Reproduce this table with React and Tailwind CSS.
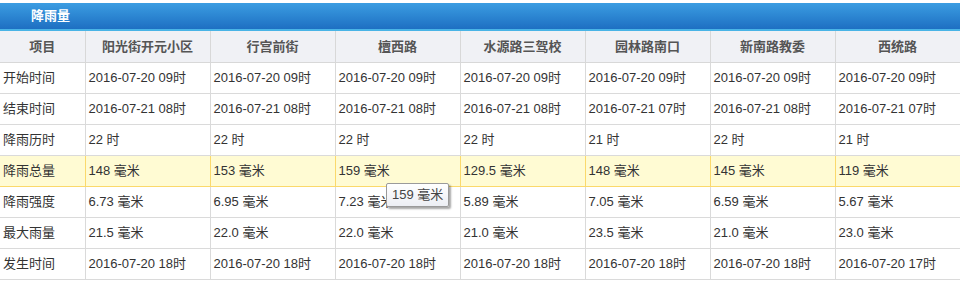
import React from "react";

const stations = ["阳光街开元小区", "行宫前街", "檀西路", "水源路三驾校", "园林路南口", "新南路教委", "西统路"];

const rows = [
  { label: "开始时间", values: ["2016-07-20 09时", "2016-07-20 09时", "2016-07-20 09时", "2016-07-20 09时", "2016-07-20 09时", "2016-07-20 09时", "2016-07-20 09时"] },
  { label: "结束时间", values: ["2016-07-21 08时", "2016-07-21 08时", "2016-07-21 08时", "2016-07-21 08时", "2016-07-21 07时", "2016-07-21 08时", "2016-07-21 07时"] },
  { label: "降雨历时", values: ["22 时", "22 时", "22 时", "22 时", "21 时", "22 时", "21 时"] },
  { label: "降雨总量", values: ["148 毫米", "153 毫米", "159 毫米", "129.5 毫米", "148 毫米", "145 毫米", "119 毫米"], active: true },
  { label: "降雨强度", values: ["6.73 毫米", "6.95 毫米", "7.23 毫米", "5.89 毫米", "7.05 毫米", "6.59 毫米", "5.67 毫米"] },
  { label: "最大雨量", values: ["21.5 毫米", "22.0 毫米", "22.0 毫米", "21.0 毫米", "23.5 毫米", "21.0 毫米", "23.0 毫米"] },
  { label: "发生时间", values: ["2016-07-20 18时", "2016-07-20 18时", "2016-07-20 18时", "2016-07-20 18时", "2016-07-20 18时", "2016-07-20 18时", "2016-07-20 17时"] },
];

const App = () => {
  return (
    <div
      className="relative w-[960px] h-[281px] bg-white pt-[3px] text-[13px] text-[#333]"
      style={{ fontFamily: '"Liberation Sans", "Noto Sans CJK SC", sans-serif' }}
    >
      {/* title bar */}
      <div className="h-[28px] bg-gradient-to-b from-[#3b9de2] to-[#1e6fc2] border-b-2 border-[#49b4e6] pl-[31px] flex items-center">
        <span className="text-white font-bold text-[13px]">降雨量</span>
      </div>

      <table className="table-fixed border-collapse w-[960px]">
        <colgroup>
          <col className="w-[85px]" />
          {stations.map((s) => (
            <col key={s} className="w-[125px]" />
          ))}
        </colgroup>
        <thead>
          <tr className="h-[31px] bg-[#f0f1f5]">
            <th className="border-b border-r border-[#d8d8d8] font-bold text-[#555] text-center">项目</th>
            {stations.map((s) => (
              <th key={s} className="border-b border-r border-[#d8d8d8] font-bold text-[#555] text-center">
                {s}
              </th>
            ))}
          </tr>
        </thead>
        <tbody>
          {rows.map((r) => (
            <tr key={r.label} className={r.active ? "h-[31px] bg-[#fffbd3]" : "h-[31px]"}>
              <td
                className={
                  r.active
                    ? "border border-l-0 border-[#fbd96b] pl-[3px] whitespace-nowrap"
                    : "border border-l-0 border-[#dadada] pl-[3px] whitespace-nowrap"
                }
              >
                {r.label}
              </td>
              {r.values.map((v, i) => (
                <td
                  key={i}
                  className={
                    r.active
                      ? "border border-[#fbd96b] pl-[3px] whitespace-nowrap"
                      : "border border-[#dadada] pl-[3px] whitespace-nowrap"
                  }
                >
                  {v}
                </td>
              ))}
            </tr>
          ))}
        </tbody>
      </table>

      {/* tooltip */}
      <div className="absolute left-[386px] top-[183px] h-[24px] px-[5px] flex items-center bg-gradient-to-b from-white to-[#eceef4] border border-[#9a9a9a] rounded-[2px] shadow-[2px_2px_2px_rgba(0,0,0,0.35)] text-[#444] text-[13px]">
        159 毫米
      </div>
    </div>
  );
};

export default App;
